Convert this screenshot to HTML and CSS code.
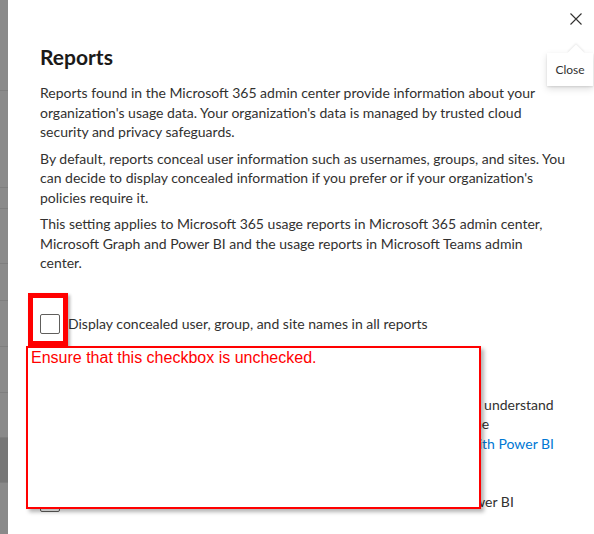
FILE: index.html
```html
<!DOCTYPE html>
<html lang="en">
<head>
  <meta charset="UTF-8">
  <meta name="viewport" content="width=device-width, initial-scale=1.0">
  <title>Reports settings</title>
  <link rel="stylesheet" href="styles.css">
</head>
<body>
  <div class="page">
    <div class="backdrop">
      <div class="backdrop-row" style="height: 91px"></div>
      <div class="backdrop-row" style="height: 97px"></div>
      <div class="backdrop-row" style="height: 21px"></div>
      <div class="backdrop-row" style="height: 55px"></div>
      <div class="backdrop-row" style="height: 37px"></div>
      <div class="backdrop-row" style="height: 46px"></div>
      <div class="backdrop-row" style="height: 46px"></div>
      <div class="backdrop-row" style="height: 45px"></div>
      <div class="backdrop-row selected" style="height: 45px"></div>
      <div class="backdrop-row last"></div>
    </div>

    <aside class="panel">
      <div class="panel-header">
        <button class="close-button" aria-label="Close">
          <svg width="12" height="12" viewBox="0 0 12 12">
            <path d="M0.5 0.5 L11.5 11.5 M11.5 0.5 L0.5 11.5" stroke="#323130" stroke-width="1.1" fill="none"/>
          </svg>
        </button>
        <div class="tooltip">Close</div>
      </div>

      <div class="panel-body">
        <h1 class="panel-title">Reports</h1>
        <p>Reports found in the Microsoft 365 admin center provide information about your organization's usage data. Your organization's data is managed by trusted cloud security and privacy safeguards.</p>
        <p>By default, reports conceal user information such as usernames, groups, and sites. You can decide to display concealed information if you prefer or if your organization's policies require it.</p>
        <p>This setting applies to Microsoft 365 usage reports in Microsoft 365 admin center, Microsoft Graph and Power BI and the usage reports in Microsoft Teams admin center.</p>

        <label class="check-row">
          <span class="checkbox"></span>
          <span class="check-label">Display concealed user, group, and site names in all reports</span>
        </label>

        <section class="usage">
          <p>Microsoft 365 usage analytics in Power BI gives you insights to help you understand<br>how people in your organization adopt the services. To enable it, send the<br>the report data below and connect an app. Learn more about <a href="#">working with Power BI</a></p>
          <label class="check-row">
            <span class="checkbox"></span>
            <span class="check-label">Make report data available to Microsoft 365 usage analytics for Power BI</span>
          </label>
        </section>
      </div>

      <!-- reviewer markup on top of the panel -->
      <div class="mark-box"></div>
      <div class="note-box">Ensure that this checkbox is unchecked.</div>
    </aside>
  </div>
</body>
</html>
```

FILE: styles.css
```css
* {
  margin: 0;
  padding: 0;
  box-sizing: border-box;
}

body {
  font-family: 'Segoe UI', Lato, 'Noto Sans', sans-serif;
  color: #323130;
  background: #ffffff;
  overflow: hidden;
  height: 534px;
}

.page {
  display: flex;
  height: 100%;
}

/* dimmed page behind the panel */
.backdrop {
  width: 8px;
  flex-shrink: 0;
  display: flex;
  flex-direction: column;
  background-color: #8a8a8a;
}

.backdrop-row {
  border-bottom: 1px solid #7e7e7e;
}

.backdrop-row.selected {
  background-color: #777777;
}

.backdrop-row.last {
  flex-grow: 1;
  border-bottom: none;
}

.panel {
  flex-grow: 1;
  position: relative;
  background-color: #ffffff;
}

.panel-header {
  display: flex;
  justify-content: flex-end;
  padding: 3px 2px 0 0;
  position: relative;
}

.close-button {
  width: 32px;
  height: 32px;
  border: none;
  background: transparent;
  display: flex;
  align-items: center;
  justify-content: center;
  cursor: pointer;
}

.tooltip {
  position: absolute;
  top: 53px;
  right: 1px;
  width: 46px;
  height: 33px;
  background-color: #ffffff;
  font-size: 12px;
  line-height: 33px;
  text-align: center;
  color: #323130;
  box-shadow: 0 3.2px 7.2px rgba(0, 0, 0, 0.13), 0 0.6px 1.8px rgba(0, 0, 0, 0.11);
  z-index: 5;
}

.tooltip::before {
  content: "";
  position: absolute;
  top: -6px;
  left: 23px;
  width: 12px;
  height: 12px;
  background-color: #ffffff;
  transform: rotate(45deg);
  box-shadow: -1px -1px 2px rgba(0, 0, 0, 0.08);
}

.tooltip::after {
  content: "";
  position: absolute;
  top: 0;
  left: 14px;
  width: 30px;
  height: 8px;
  background-color: #ffffff;
}

.panel-body {
  padding: 0 26px 0 32px;
}

.panel-title {
  font-size: 21px;
  font-weight: 700;
  line-height: 28px;
  margin-top: 8px;
  margin-bottom: 12px;
  color: #1b1a19;
}

.panel-body p {
  font-size: 14px;
  line-height: 19.5px;
  margin-bottom: 7px;
}

.panel-body a {
  color: #0078d4;
  text-decoration: none;
}

.check-row {
  display: flex;
  align-items: center;
  gap: 8px;
  margin-top: 41px;
  font-size: 14px;
  line-height: 20px;
}

.checkbox {
  width: 20px;
  height: 20px;
  border: 1px solid #605e5c;
  border-radius: 2px;
  flex-shrink: 0;
}

.usage p {
  margin-top: 61px;
  margin-bottom: 0;
}

.usage .check-row {
  margin-top: 39px;
}

.mark-box {
  position: absolute;
  left: 20px;
  top: 293px;
  width: 40px;
  height: 53px;
  border: 5px solid #ff0000;
  box-shadow: 2px 2px 3px rgba(0, 0, 0, 0.3);
}

.note-box {
  position: absolute;
  left: 18px;
  top: 346px;
  width: 455px;
  height: 163px;
  border: 2px solid #ff0000;
  background-color: #ffffff;
  padding: 1px 3px;
  font-family: 'Liberation Sans', Arial, sans-serif;
  font-size: 16px;
  color: #ff0000;
  box-shadow: 3px 3px 4px rgba(0, 0, 0, 0.3);
}
```
